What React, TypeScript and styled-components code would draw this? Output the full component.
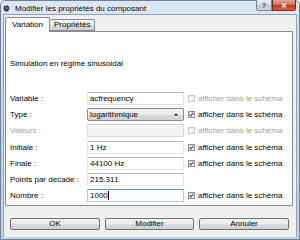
import React from 'react';
import styled, { createGlobalStyle } from 'styled-components';

const GlobalStyle = createGlobalStyle`
  html, body {
    margin: 0;
    padding: 0;
    background: #ffffff;
  }
  body {
    font-family: "Liberation Sans", Arial, sans-serif;
    font-size: 8px;
    color: #000;
  }
`;

const Window = styled.div`
  width: 300px;
  height: 240px;
  box-sizing: border-box;
  display: flex;
  flex-direction: column;
  background: linear-gradient(to bottom, #dce7f3 0%, #cddcec 25%, #bfd2e7 100%);
  border: 1px solid #6e819b;
  border-radius: 5px 5px 0 0;
  padding: 0 3px 2px 3px;
`;

const TitleBar = styled.div`
  height: 13px;
  display: flex;
  align-items: flex-start;
`;

const AppIcon = styled.svg`
  width: 7px;
  height: 7px;
  margin: 4px 5px 0 -1px;
  flex: none;
`;

const TitleText = styled.span`
  line-height: 13px;
  margin-top: 1px;
  white-space: nowrap;
  text-shadow: 0 0 3px rgba(255, 255, 255, 0.9);
`;

const CaptionButtons = styled.div`
  margin-left: auto;
  margin-top: -1px;
  display: flex;
`;

const CaptionButton = styled.div<{ $close?: boolean }>`
  box-sizing: border-box;
  height: 11px;
  width: ${(p) => (p.$close ? '24px' : '16px')};
  border: 1px solid ${(p) => (p.$close ? '#7a2b1e' : '#77849a')};
  border-top: none;
  border-radius: ${(p) => (p.$close ? '0 0 3px 0' : '0 0 0 3px')};
  background: ${(p) =>
    p.$close
      ? 'linear-gradient(to bottom, #e8a493 0%, #d7705a 45%, #c13f24 55%, #d2613f 100%)'
      : 'linear-gradient(to bottom, #e6edf5 0%, #d3dde9 45%, #bccadb 55%, #c9d6e5 100%)'};
  display: flex;
  align-items: center;
  justify-content: center;
  color: ${(p) => (p.$close ? '#fff' : '#3b4555')};
  font-size: 7px;
  font-weight: bold;
  line-height: 1;
`;

const Client = styled.div`
  flex: 1;
  background: #f0f0f0;
  display: flex;
  flex-direction: column;
  padding: 2px 3px 0 1px;
  border: 1px solid #8da2bb;
  border-bottom: none;
  margin: 0 -1px;
`;

const TabStrip = styled.div`
  height: 14px;
  display: flex;
  align-items: flex-end;
`;

const Tab = styled.div<{ $active?: boolean }>`
  box-sizing: border-box;
  height: ${(p) => (p.$active ? '15px' : '12px')};
  margin-bottom: ${(p) => (p.$active ? '-1px' : '0')};
  padding: 0 ${(p) => (p.$active ? '6px' : '4px')};
  border: 1px solid #898c95;
  border-bottom: ${(p) => (p.$active ? 'none' : '1px solid #898c95')};
  border-left: ${(p) => (p.$active ? '1px solid #898c95' : 'none')};
  border-radius: 2px 2px 0 0;
  background: ${(p) =>
    p.$active ? '#ffffff' : 'linear-gradient(to bottom, #f2f2f2 0%, #ebebeb 50%, #dddddd 51%, #cfcfcf 100%)'};
  line-height: ${(p) => (p.$active ? '14px' : '10px')};
  position: relative;
  z-index: ${(p) => (p.$active ? 1 : 0)};
  white-space: nowrap;
`;

const Panel = styled.div`
  box-sizing: border-box;
  height: 175px;
  background: #ffffff;
  border: 1px solid #898c95;
  padding: 0 4px;
`;

const Heading = styled.div`
  line-height: 10px;
  margin-top: 27px;
`;

const Form = styled.div`
  margin-top: 23px;
  display: grid;
  grid-template-columns: 77px 97px auto;
  grid-auto-rows: 13px;
  row-gap: 3.2px;
  align-items: center;
`;

const Label = styled.span<{ $disabled?: boolean }>`
  color: ${(p) => (p.$disabled ? '#a0a0a0' : '#000')};
  white-space: nowrap;
  line-height: 13px;
`;

const Field = styled.div<{ $disabled?: boolean; $focus?: boolean }>`
  box-sizing: border-box;
  height: 13px;
  padding-left: 2px;
  line-height: 11px;
  display: flex;
  align-items: center;
  background: ${(p) => (p.$disabled ? '#f4f4f4' : '#ffffff')};
  border: 1px solid ${(p) => (p.$focus ? '#a7cdf0' : p.$disabled ? '#dadada' : '#e0e3e8')};
  border-top-color: ${(p) => (p.$focus ? '#5c9ad8' : p.$disabled ? '#cfcfcf' : '#b5b8be')};
  white-space: nowrap;
`;

const Caret = styled.span`
  width: 1px;
  height: 9px;
  background: #000;
  margin-left: 0;
`;

const Select = styled.div`
  box-sizing: border-box;
  height: 13px;
  padding: 0 5px 0 2px;
  display: flex;
  align-items: center;
  justify-content: space-between;
  border: 1px solid #8a8a8a;
  border-radius: 2px;
  background: linear-gradient(to bottom, #f4f4f4 0%, #ebebeb 50%, #dddddd 51%, #d2d2d2 100%);
  white-space: nowrap;
`;

const Arrow = styled.span`
  width: 0;
  height: 0;
  border-left: 2px solid transparent;
  border-right: 2px solid transparent;
  border-top: 2px solid #000;
`;

const Check = styled.div<{ $disabled?: boolean }>`
  display: flex;
  align-items: center;
  gap: 3px;
  margin-left: 4px;
  color: ${(p) => (p.$disabled ? '#a0a0a0' : '#000')};
  white-space: nowrap;
`;

const Box = styled.span<{ $disabled?: boolean }>`
  box-sizing: border-box;
  width: 7px;
  height: 7px;
  flex: none;
  border: 1px solid ${(p) => (p.$disabled ? '#c8c8c8' : '#8e8f8f')};
  background: ${(p) => (p.$disabled ? '#f4f4f4' : 'linear-gradient(135deg, #dcdcdc 0%, #f8f8f8 100%)')};
  display: flex;
  align-items: center;
  justify-content: center;
`;

const ButtonRow = styled.div`
  display: flex;
  gap: 5px;
  margin-top: 12px;
  padding-left: 5px;
`;

const Button = styled.div<{ $w: number }>`
  box-sizing: border-box;
  width: ${(p) => p.$w}px;
  height: 12px;
  border: 1px solid #707070;
  border-radius: 2px;
  background: linear-gradient(to bottom, #f2f2f2 0%, #ebebeb 50%, #dddddd 51%, #cfcfcf 100%);
  display: flex;
  align-items: center;
  justify-content: center;
  line-height: 10px;
`;

const CheckMark = () => (
  <svg width="5" height="5" viewBox="0 0 5 5">
    <path d="M0.6 2.6 L1.9 3.9 L4.4 0.8" fill="none" stroke="#3b4f8c" strokeWidth="1.1" />
  </svg>
);

const ShowInSchema = ({ checked, disabled }: { checked?: boolean; disabled?: boolean }) => (
  <Check $disabled={disabled}>
    <Box $disabled={disabled}>{checked && <CheckMark />}</Box>
    afficher dans le schéma
  </Check>
);

export default function App() {
  return (
    <>
      <GlobalStyle />
      <Window>
        <TitleBar>
          <AppIcon viewBox="0 0 7 7">
            <path d="M1 1 L5 0.5 L6.5 3 L5 6.5 L1.5 6 L0.5 3.5 Z" fill="#3a2f4a" />
            <path d="M2 2 L4.5 2 L5 4 L2.5 4.5 Z" fill="#7a6a99" />
          </AppIcon>
          <TitleText>Modifier les propriétés du composant</TitleText>
          <CaptionButtons>
            <CaptionButton>?</CaptionButton>
            <CaptionButton $close>✕</CaptionButton>
          </CaptionButtons>
        </TitleBar>
        <Client>
          <TabStrip>
            <Tab $active>Variation</Tab>
            <Tab>Propriétés</Tab>
          </TabStrip>
          <Panel>
            <Heading>Simulation en régime sinusoidal</Heading>
            <Form>
              <Label>Variable :</Label>
              <Field>acfrequency</Field>
              <ShowInSchema disabled />

              <Label>Type :</Label>
              <Select>
                logarithmique
                <Arrow />
              </Select>
              <ShowInSchema checked />

              <Label $disabled>Valeurs :</Label>
              <Field $disabled />
              <ShowInSchema disabled />

              <Label>Initiale :</Label>
              <Field>1 Hz</Field>
              <ShowInSchema checked />

              <Label>Finale :</Label>
              <Field>44100 Hz</Field>
              <ShowInSchema checked />

              <Label>Points par decade :</Label>
              <Field>215.311</Field>
              <span />

              <Label>Nombre :</Label>
              <Field $focus>
                1000
                <Caret />
              </Field>
              <ShowInSchema checked />
            </Form>
          </Panel>
          <ButtonRow>
            <Button $w={90}>OK</Button>
            <Button $w={89}>Modifier</Button>
            <Button $w={90}>Annuler</Button>
          </ButtonRow>
        </Client>
      </Window>
    </>
  );
}
